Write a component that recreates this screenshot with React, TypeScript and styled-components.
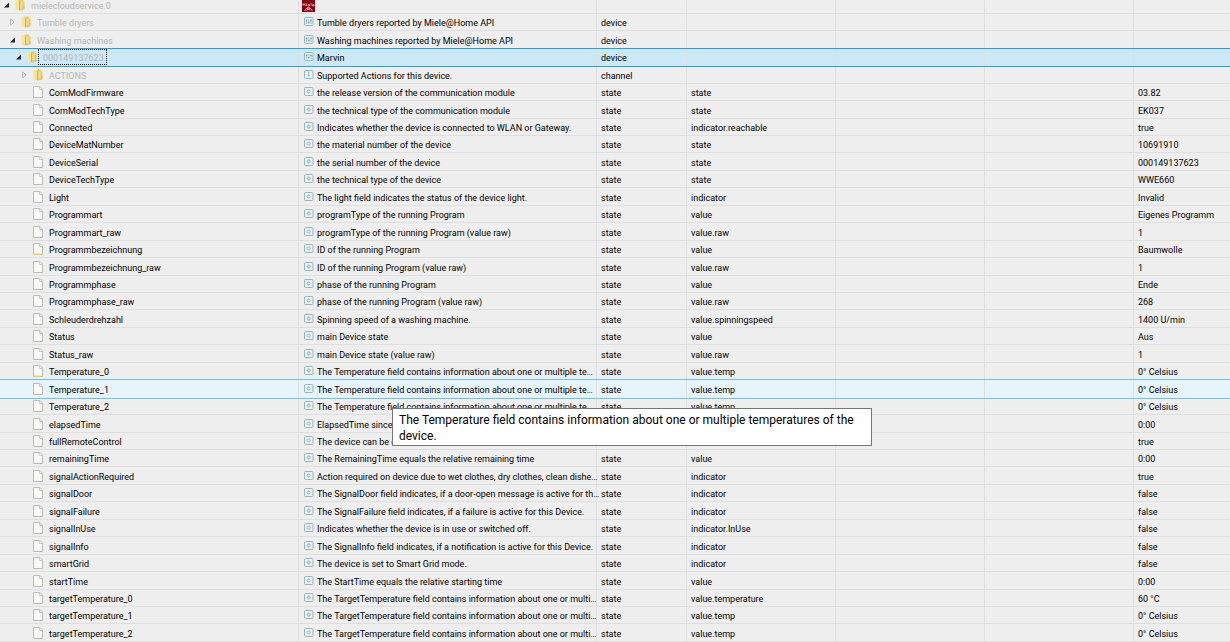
import React from "react";
import styled, { createGlobalStyle, css } from "styled-components";

type Kind = "root" | "folder" | "state";
type Glyph = "logo" | "device" | "channel" | "state";

interface Item {
  name: string;
  level: number;
  kind: Kind;
  glyph: Glyph;
  open?: boolean;
  custom?: boolean;
  text?: string;
  type?: string;
  role?: string;
  value?: string;
}

const state = (name: string, text: string, role: string, value: string, custom = false): Item => ({
  name,
  level: 3,
  kind: "state",
  glyph: "state",
  text,
  type: "state",
  role,
  value,
  custom,
});

const TEMPERATURE = "The Temperature field contains information about one or multiple te…";
const TEMPERATURE_FULL = "The Temperature field contains information about one or multiple temperatures of the device.";
const TARGET = "The TargetTemperature field contains information about one or multi…";

const SELECTED = "000149137623";
const HOVERED = "Temperature_1";

const items: Item[] = [
  { name: "mielecloudservice.0", level: 0, kind: "root", glyph: "logo", open: true },
  { name: "Tumble dryers", level: 1, kind: "folder", glyph: "device", text: "Tumble dryers reported by Miele@Home API", type: "device" },
  { name: "Washing machines", level: 1, kind: "folder", glyph: "device", open: true, text: "Washing machines reported by Miele@Home API", type: "device" },
  { name: SELECTED, level: 2, kind: "folder", glyph: "device", open: true, text: "Marvin", type: "device" },
  { name: "ACTIONS", level: 3, kind: "folder", glyph: "channel", text: "Supported Actions for this device.", type: "channel" },
  state("ComModFirmware", "the release version of the communication module", "state", "03.82"),
  state("ComModTechType", "the technical type of the communication module", "state", "EK037"),
  state("Connected", "Indicates whether the device is connected to WLAN or Gateway.", "indicator.reachable", "true"),
  state("DeviceMatNumber", "the material number of the device", "state", "10691910"),
  state("DeviceSerial", "the serial number of the device", "state", "000149137623"),
  state("DeviceTechType", "the technical type of the device", "state", "WWE660"),
  state("Light", "The light field indicates the status of the device light.", "indicator", "Invalid"),
  state("Programmart", "programType of the running Program", "value", "Eigenes Programm"),
  state("Programmart_raw", "programType of the running Program (value raw)", "value.raw", "1"),
  state("Programmbezeichnung", "ID of the running Program", "value", "Baumwolle", true),
  state("Programmbezeichnung_raw", "ID of the running Program (value raw)", "value.raw", "1"),
  state("Programmphase", "phase of the running Program", "value", "Ende"),
  state("Programmphase_raw", "phase of the running Program (value raw)", "value.raw", "268"),
  state("Schleuderdrehzahl", "Spinning speed of a washing machine.", "value.spinningspeed", "1400 U/min"),
  state("Status", "main Device state", "value", "Aus"),
  state("Status_raw", "main Device state (value raw)", "value.raw", "1"),
  state("Temperature_0", TEMPERATURE, "value.temp", "0° Celsius", true),
  state(HOVERED, TEMPERATURE, "value.temp", "0° Celsius"),
  state("Temperature_2", TEMPERATURE, "value.temp", "0° Celsius"),
  state("elapsedTime", "ElapsedTime since program start", "value", "0:00"),
  state("fullRemoteControl", "The device can be controlled from remote.", "indicator", "true"),
  state("remainingTime", "The RemainingTime equals the relative remaining time", "value", "0:00"),
  state("signalActionRequired", "Action required on device due to wet clothes, dry clothes, clean dishe…", "indicator", "true"),
  state("signalDoor", "The SignalDoor field indicates, if a door-open message is active for th…", "indicator", "false"),
  state("signalFailure", "The SignalFailure field indicates, if a failure is active for this Device.", "indicator", "false"),
  state("signalInUse", "Indicates whether the device is in use or switched off.", "indicator.InUse", "false"),
  state("signalInfo", "The SignalInfo field indicates, if a notification is active for this Device.", "indicator", "false"),
  state("smartGrid", "The device is set to Smart Grid mode.", "indicator", "false"),
  state("startTime", "The StartTime equals the relative starting time", "value", "0:00"),
  state("targetTemperature_0", TARGET, "value.temperature", "60 °C"),
  state("targetTemperature_1", TARGET, "value.temp", "0° Celsius"),
  state("targetTemperature_2", TARGET, "value.temp", "0° Celsius"),
];

const GlobalStyle = createGlobalStyle`
  *, *::before, *::after { box-sizing: border-box; }
  body { margin: 0; background: #eee; }
`;

const Viewport = styled.main`
  overflow: hidden;
`;

/* The list is scrolled a few pixels into its first row. */
const Table = styled.table`
  width: 100%;
  margin-top: -4px;
  table-layout: fixed;
  border-collapse: separate;
  border-spacing: 0;
  font: 9px/14px Roboto, "Liberation Sans", sans-serif;
  color: #000;
`;

const Col = styled.col<{ $width?: number }>`
  ${(p) => p.$width && `width: ${p.$width}px;`}
`;

const Cell = styled.td`
  padding: 2px 0 0 4px;
  border-right: 1px solid #dedede;
  border-bottom: 1px solid #dedede;
  white-space: nowrap;
  vertical-align: middle;

  &:last-child { border-right: 0; }
`;

const NameCell = styled(Cell)`
  padding: 0;
`;

const TextCell = styled(Cell)`
  position: relative;
  padding: 0 0 0 5px;
`;

const marked = (fill: string, line: string) => css`
  position: relative;
  z-index: 1;
  background: ${fill};
  box-shadow: 0 -1px ${line}, 0 1px ${line};

  ${Cell} { border-bottom-color: ${fill}; }
`;

const Row = styled.tr<{ $mark?: "selected" | "hovered" }>`
  height: 17px;

  &:nth-child(9n + 1),
  &:nth-child(9n + 3),
  &:nth-child(9n + 5),
  &:nth-child(9n + 7) { height: 18px; }

  ${(p) => p.$mark === "selected" && marked("#cbe8f6", "#26a0da")}
  ${(p) => p.$mark === "hovered" && marked("#e5f3fb", "#70c0e7")}
`;

const NameLine = styled.div<{ $level: number }>`
  display: flex;
  align-items: center;
  height: 16px;
  padding-left: ${(p) => 4 + p.$level * 6}px;
`;

const Toggle = styled.button`
  display: flex;
  width: 11px;
  padding: 0;
  border: 0;
  background: none;
`;

const ToggleSpace = styled.span`
  width: 11px;
`;

const Label = styled.span<{ $dim: boolean; $focus: boolean }>`
  margin-left: 1px;
  padding: 2px 2px 0 4px;
  border: 1px dotted ${(p) => (p.$focus ? "#000" : "transparent")};
  line-height: 12px;
  color: ${(p) => (p.$dim ? "#b5b5b5" : "#000")};
`;

const TextLine = styled.div`
  display: flex;
  align-items: center;
  gap: 3px;
  height: 16px;
`;

const Description = styled.span`
  padding-top: 2px;
`;

const Icon = styled.svg`
  flex: none;
  display: block;
`;

const Logo = styled(Icon)`
  margin-left: -2px;
`;

const Tooltip = styled.div`
  position: absolute;
  top: 28px;
  left: 93px;
  width: 480px;
  padding: 3px 6px 1px;
  border: 1px solid #767676;
  background: #fff;
  font-size: 12px;
  line-height: 16px;
  white-space: normal;
`;

function Arrow({ open }: { open?: boolean }) {
  return (
    <Icon width="6" height="8" viewBox="0 0 6 8" aria-hidden="true">
      {open ? <path d="M5 1.5V6.5H0Z" fill="#262626" /> : <path d="M0.7 1L4 4L0.7 7Z" fill="#fff" stroke="#a6a6a6" strokeWidth="0.9" />}
    </Icon>
  );
}

function Folder() {
  return (
    <Icon width="10" height="12" viewBox="0 0 10 12" aria-hidden="true">
      <path d="M0.5 1.5L4.5 1V11.5L0.5 10.5Z" fill="#f6e396" />
      <path d="M4 0.5H8V2.5H9.5V10.5L5.5 11.5L4 10.5Z" fill="#e6c968" />
      <path d="M4 1.5L5 2.5V11.5L4 11Z" fill="#d3b04c" />
      <path d="M5.5 2.5H7.5V9.5H5.5Z" fill="#f4df8e" />
      <path d="M8 7H9.5V9.5H8Z" fill="#b9bfa0" />
    </Icon>
  );
}

function Page({ custom }: { custom?: boolean }) {
  return (
    <Icon width="10" height="12" viewBox="0 0 10 12" aria-hidden="true">
      <path d="M0.5 0.5H7L9.5 3V11.5H0.5Z" fill="#f9f9f5" stroke="#bababa" />
      <path d="M6.5 0.5V3.5H9.5" fill="none" stroke="#c9c9c9" />
      {custom && <path d="M1 11.3H8" stroke="#f0cf55" strokeWidth="1.4" />}
    </Icon>
  );
}

function TypeGlyph({ glyph }: { glyph: Glyph }) {
  if (glyph === "logo") {
    return (
      <Logo width="13" height="14" viewBox="0 0 13 14" aria-hidden="true">
        <path d="M0 0H13V14H0Z" fill="#8c0014" />
        <path d="M1 8V5.5L2 7L3 5.5V8M4.5 5.5V8M6 6.5H7.5V8H6ZM9 5V8M10.5 6.5H12V8H10.5Z" fill="none" stroke="#dfa9ae" strokeWidth="0.8" />
        <path d="M2.5 13L5 9.8H8L10.5 13M5 10L8.5 12.5M8 10L4.5 12.5" fill="none" stroke="#e8c2c6" strokeWidth="0.8" />
      </Logo>
    );
  }
  return (
    <Icon width="10" height="10" viewBox="0 0 10 10" fill="none" stroke="#93b6c3" aria-hidden="true">
      <rect x="0.5" y="0.5" width="8.5" height="8" rx="1" fill="#e9f0f2" />
      {glyph === "device" && (
        <>
          <path d="M2.5 2V7M4.7 2V7M7 2V7" strokeWidth="0.9" />
          <path d="M1.8 3.5H3.2M4 5.5H5.4M6.3 3.5H7.7" stroke="#6d9fb2" />
        </>
      )}
      {glyph === "channel" && <path d="M4.7 1.5V6.5M3.6 5.5H5.8" />}
      {glyph === "state" && <circle cx="4.8" cy="4.5" r="1.5" />}
    </Icon>
  );
}

function ItemRow({ item }: { item: Item }) {
  const branch = item.kind !== "state";
  const hovered = item.name === HOVERED;
  const selected = item.name === SELECTED;
  return (
    <Row $mark={selected ? "selected" : hovered ? "hovered" : undefined}>
      <NameCell>
        <NameLine $level={item.level}>
          {branch ? (
            <Toggle type="button" aria-expanded={!!item.open} aria-label={item.name}>
              <Arrow open={item.open} />
            </Toggle>
          ) : (
            <ToggleSpace />
          )}
          {branch ? <Folder /> : <Page custom={item.custom} />}
          <Label $dim={branch} $focus={selected}>{item.name}</Label>
        </NameLine>
      </NameCell>
      <TextCell>
        <TextLine>
          <TypeGlyph glyph={item.glyph} />
          <Description>{item.text}</Description>
        </TextLine>
        {hovered && <Tooltip role="tooltip">{TEMPERATURE_FULL}</Tooltip>}
      </TextCell>
      <Cell>{item.type}</Cell>
      <Cell>{item.role}</Cell>
      <Cell />
      <Cell />
      <Cell>{item.value}</Cell>
    </Row>
  );
}

export default function App() {
  return (
    <Viewport>
      <GlobalStyle />
      <Table>
        <colgroup>
          <Col $width={299} />
          <Col $width={298} />
          <Col $width={90} />
          <Col $width={149} />
          <Col $width={149} />
          <Col $width={149} />
          <Col />
        </colgroup>
        <tbody>
          {items.map((item) => (
            <ItemRow key={item.name} item={item} />
          ))}
        </tbody>
      </Table>
    </Viewport>
  );
}
